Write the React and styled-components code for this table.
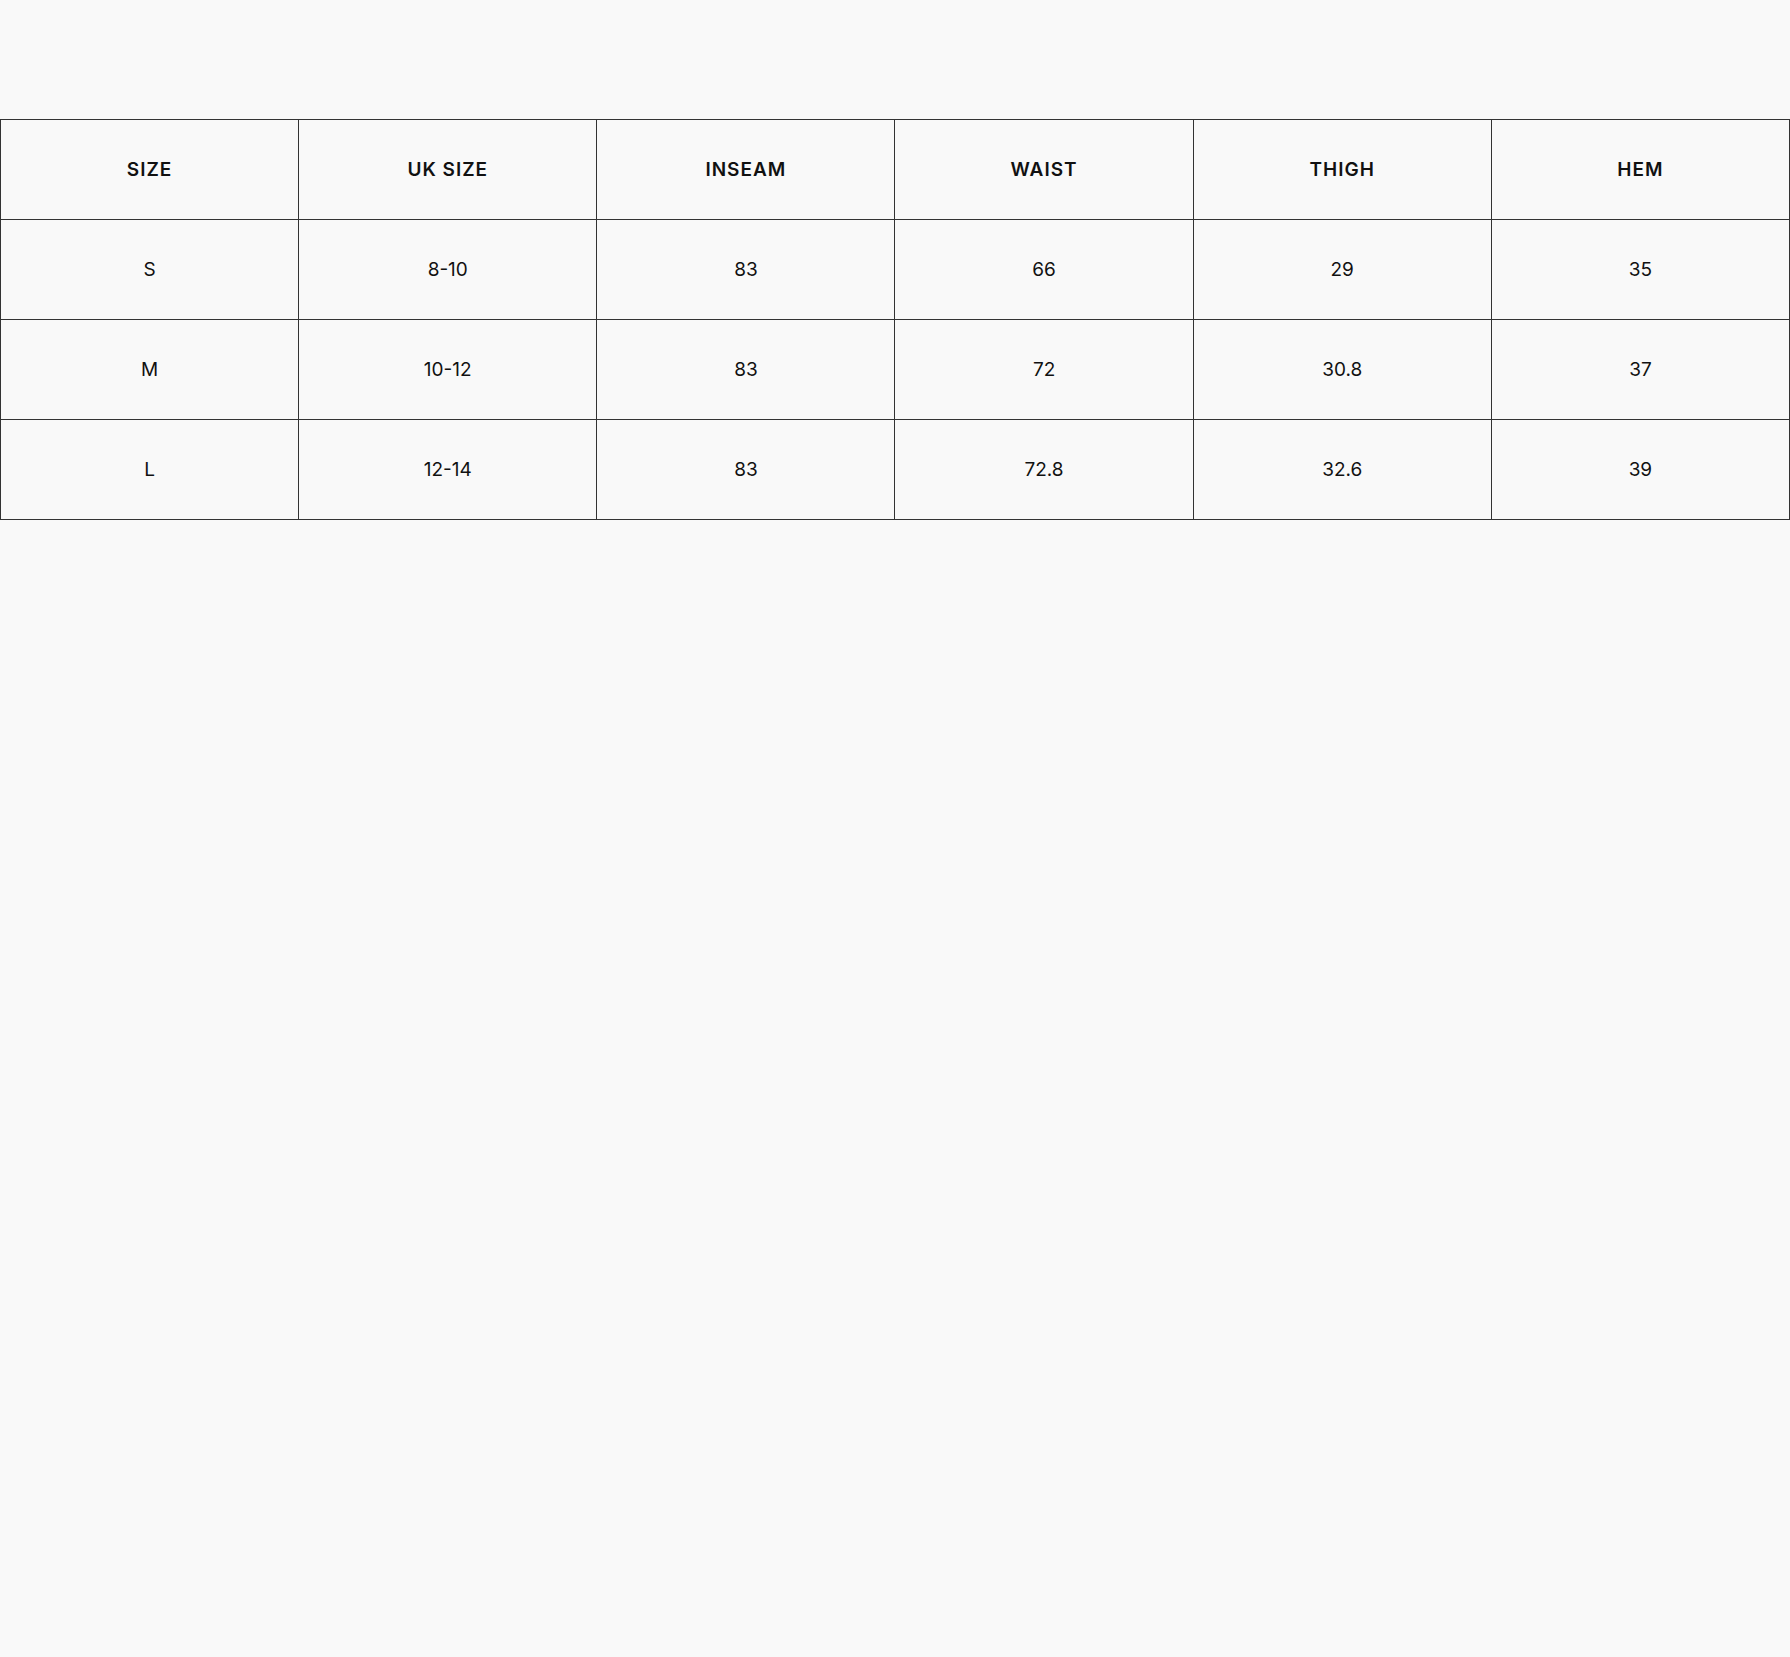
import styled, { createGlobalStyle } from 'styled-components'

const GlobalStyle = createGlobalStyle`
    body {
        margin: 0;
        background: #f9f9f9;
        font-family: Inter, "Noto Sans", sans-serif;
        color: #111;
    }
`

const Page = styled.div`
    min-height: 1657px;
    padding-top: 119px;
    box-sizing: border-box;
`

const Table = styled.table`
    width: 100%;
    border-collapse: collapse;
    table-layout: fixed;
    border: 1px solid #333;
`

const HeadCell = styled.th`
    height: 99px;
    border: 1px solid #333;
    font-size: 19px;
    font-weight: 600;
    letter-spacing: 1px;
    text-align: center;
    vertical-align: middle;
    padding: 0;
`

const Cell = styled.td`
    height: 99px;
    border: 1px solid #333;
    font-size: 19px;
    font-weight: 400;
    text-align: center;
    vertical-align: middle;
    padding: 0;
`

const columns = ['SIZE', 'UK SIZE', 'INSEAM', 'WAIST', 'THIGH', 'HEM']

const rows = [
    ['S', '8-10', '83', '66', '29', '35'],
    ['M', '10-12', '83', '72', '30.8', '37'],
    ['L', '12-14', '83', '72.8', '32.6', '39'],
]

const App = () => {
    return (
        <>
        <GlobalStyle />
        <Page>
            <Table>
                <thead>
                    <tr>
                        {columns.map(c => <HeadCell key={c}>{c}</HeadCell>)}
                    </tr>
                </thead>
                <tbody>
                    {rows.map(r => (
                        <tr key={r[0]}>
                            {r.map((v, i) => <Cell key={i}>{v}</Cell>)}
                        </tr>
                    ))}
                </tbody>
            </Table>
        </Page>
        </>
    )
}

export default App
